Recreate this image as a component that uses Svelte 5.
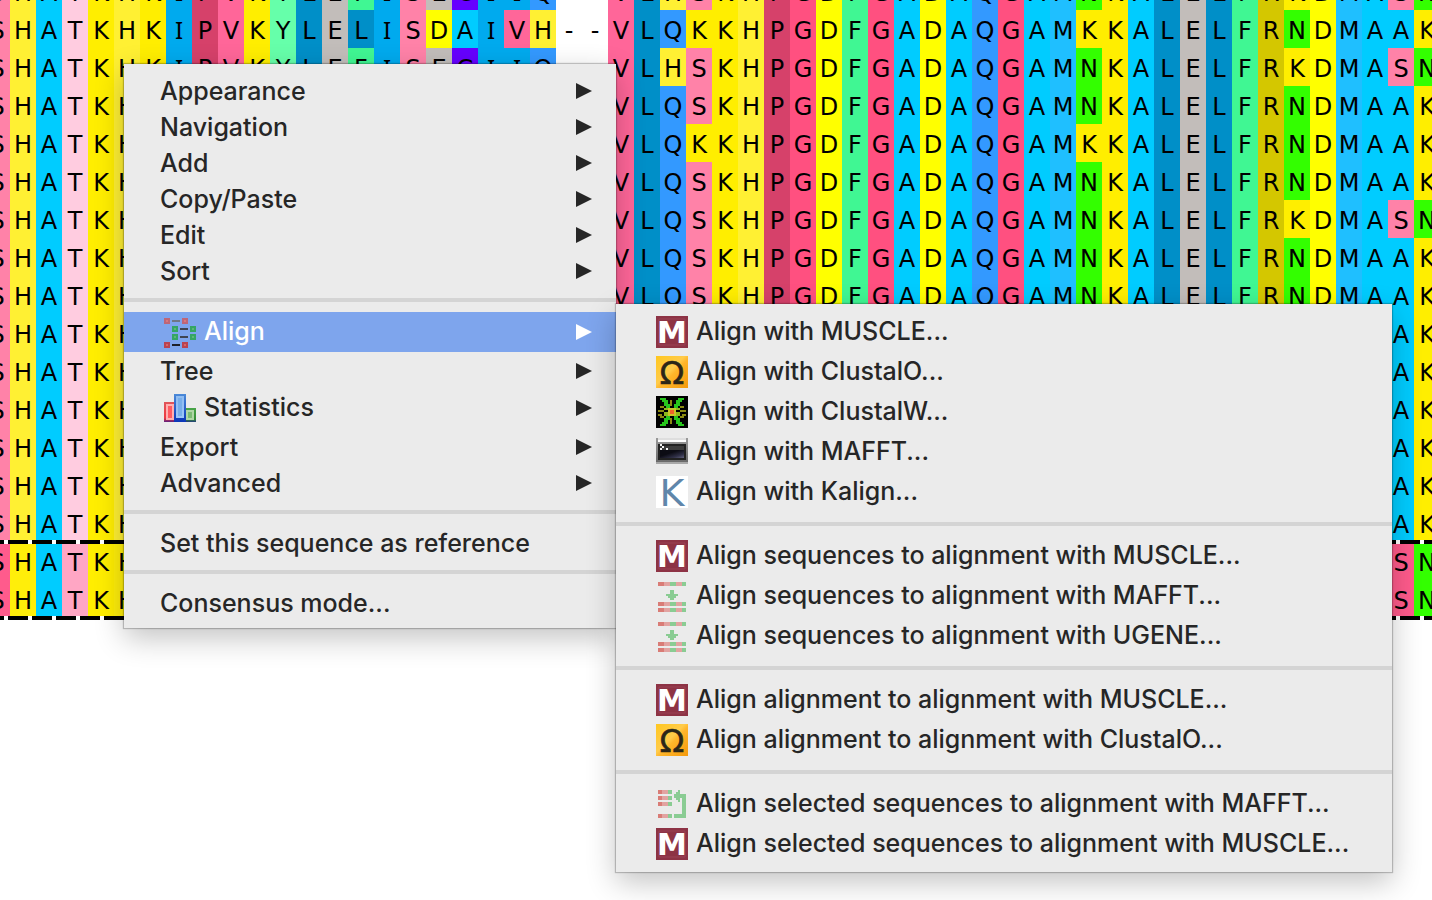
<script>
  const common = 'SHATKHKIPVKYLEFISECIIQ--VL';
  const tail = 'KHPGDFGADAQGAM';
  const typical = common + 'QS' + tail + 'NKALELFRNDMAAK';
  const variant = common + 'HS' + tail + 'NKALELFRKDMASN';

  const rows = [
    variant,
    'SHATKHKIPVKYLELISDAIVH--VLQK' + tail + 'KKALELFRNDMAAK',
    variant,
    typical,
    common + 'QK' + tail + 'KKALELFRNDMAAK',
    typical,
    common + 'QS' + tail + 'NKALELFRKDMASN',
    ...Array(8).fill(typical)
  ];
  const consensus = [variant, variant];

  const menu = [
    { label: 'Appearance', sub: true },
    { label: 'Navigation', sub: true },
    { label: 'Add', sub: true },
    { label: 'Copy/Paste', sub: true },
    { label: 'Edit', sub: true },
    { label: 'Sort', sub: true },
    null,
    { label: 'Align', sub: true, icon: 'align', active: true },
    { label: 'Tree', sub: true },
    { label: 'Statistics', sub: true, icon: 'stats' },
    { label: 'Export', sub: true },
    { label: 'Advanced', sub: true },
    null,
    { label: 'Set this sequence as reference' },
    null,
    { label: 'Consensus mode...' }
  ];

  const submenu = [
    { label: 'Align with MUSCLE...', icon: 'muscle' },
    { label: 'Align with ClustalO...', icon: 'omega' },
    { label: 'Align with ClustalW...', icon: 'clustalw' },
    { label: 'Align with MAFFT...', icon: 'terminal' },
    { label: 'Align with Kalign...', icon: 'kalign' },
    null,
    { label: 'Align sequences to alignment with MUSCLE...', icon: 'muscle' },
    { label: 'Align sequences to alignment with MAFFT...', icon: 'insert' },
    { label: 'Align sequences to alignment with UGENE...', icon: 'insert' },
    null,
    { label: 'Align alignment to alignment with MUSCLE...', icon: 'muscle' },
    { label: 'Align alignment to alignment with ClustalO...', icon: 'omega' },
    null,
    { label: 'Align selected sequences to alignment with MAFFT...', icon: 'selected' },
    { label: 'Align selected sequences to alignment with MUSCLE...', icon: 'muscle' }
  ];
</script>

{#snippet bars(y)}
  <path fill="#d97c76" d="M1 {y}h3v2h-3z" />
  <path fill="#e2a3a1" d="M4 {y}h3v2h-3zM10 {y}h3v2h-3z" />
  <path fill="#8acc93" d="M7 {y}h3v2h-3zM13 {y}h2v2h-2z" />
{/snippet}

{#snippet icon(name)}
  <svg class="icon" viewBox="0 0 16 16" aria-hidden="true">
    {#if name === 'align'}
      <g shape-rendering="crispEdges">
        <path fill="#bd6678" d="M0 1h3v3H0zM9 1h3v3H9z" />
        <path fill="#d9777d" d="M1 2h1v1H1zM10 2h1v1h-1z" />
        <path fill="#35a565" d="M4 5h3v3H4zM13 5h3v3h-3zM4 9h3v3H4zM13 9h3v3h-3z" />
        <path fill="#5ab878" d="M5 6h1v1H5zM14 6h1v1h-1zM5 10h1v1H5zM14 10h1v1h-1z" />
        <path fill="#bb4350" d="M0 13h3v3H0zM9 13h3v3H9z" />
        <path fill="#d76565" d="M1 14h1v1H1zM10 14h1v1h-1z" />
        <path fill="#6f7786" d="M4 2h4v1H4z" />
        <path fill="#3f4452" d="M8 6h4v1H8zM8 10h4v1H8z" />
        <path fill="#1d2029" d="M4 14h4v1H4z" />
      </g>
    {:else if name === 'stats'}
      <defs>
        <linearGradient id="blue" x1="0" y1="0" x2="0" y2="1"><stop offset="0" stop-color="#4b8ad8" /><stop offset="1" stop-color="#0a35b8" /></linearGradient>
        <linearGradient id="red" x1="0" y1="0" x2="0" y2="1"><stop offset="0" stop-color="#e0555a" /><stop offset=".8" stop-color="#ef3a40" /><stop offset="1" stop-color="#5a2080" /></linearGradient>
        <linearGradient id="green" x1="0" y1="0" x2="0" y2="1"><stop offset="0" stop-color="#4aa54a" /><stop offset=".8" stop-color="#348c34" /><stop offset="1" stop-color="#233a80" /></linearGradient>
        <linearGradient id="sky" x1="0" y1="0" x2="0" y2="1"><stop offset="0" stop-color="#8fbcf0" /><stop offset="1" stop-color="#9cc6f8" /></linearGradient>
      </defs>
      <g shape-rendering="crispEdges">
        <path fill="url(#red)" d="M0 5h5v10H0z" />
        <path fill="#ffb0b0" d="M1 6h4v8H1z" /><path fill="#ff5b62" d="M2 7h2v6H2z" />
        <path fill="url(#green)" d="M11 8h5v7h-5z" />
        <path fill="#b0d6a6" d="M11 9h4v5h-4z" /><path fill="#7dbb75" d="M12 10h2v3h-2z" />
        <path fill="url(#blue)" d="M5 1h6v14H5z" />
        <path fill="url(#sky)" d="M6 2h4v11H6z" /><path fill="#78aeea" d="M7 3h2v9H7z" />
      </g>
    {:else if name === 'muscle'}
      <path fill="#8d3345" d="M0 0h16v16H0z" />
      <path fill="none" stroke="#9a4355" stroke-width=".5" d="M1.500 1.500h13v13h-13z" />
      <text x="8" y="13.500" class="m" text-anchor="middle">M</text>
    {:else if name === 'omega'}
      <defs><linearGradient id="gold" x1="0" y1="0" x2="1" y2="1"><stop offset="0" stop-color="#ffc71f" /><stop offset=".45" stop-color="#ffcb4a" /><stop offset=".55" stop-color="#ffb52a" /><stop offset="1" stop-color="#f49a0c" /></linearGradient></defs>
      <path fill="url(#gold)" d="M0 0h16v16H0z" />
      <text x="8" y="14" class="o" text-anchor="middle">Ω</text>
    {:else if name === 'clustalw'}
      <path d="M0 0h16v16H0z" />
      <g shape-rendering="crispEdges">
        <path fill="#8c8a12" d="M5 3h1v2H5zM10 3h1v2h-1zM7 2h1v3H7zM1 7h3v1H1zM12 7h3v1h-3zM2 5h2v1H2zM12 5h2v1h-2zM2 10h2v1H2zM12 10h2v1h-2zM1 9h2v1H1zM13 9h2v1h-2zM5 11h1v3H5zM10 11h1v3h-1zM7 11h1v3H7z" />
        <path fill="#8fb81c" d="M6 4h1v2H6zM9 4h1v2H9zM4 6h8v1H4zM4 9h8v1H4zM6 10h1v2H6zM9 10h1v2H9zM4 8h8v1H4z" />
        <path fill="#27c51c" d="M2 1h3v1h1v2h1v2h1v1H6V6H5V5H4V3H3V2H2zM11 1h3v1h-1v1h-1v2h-1v1h-1v1H8V6h1V4h1V2h1zM6 9h2v1H7v2H6v2H5v1H2v-1h1v-1h1v-2h1v-1h1zM8 9h2v1h1v1h1v2h1v1h1v1h-3v-1h-1v-2H9v-2H8z" />
        <path fill="#c9c528" d="M6 6h4v4H6z" /><path fill="#f0642a" d="M7 7h2v2H7z" />
      </g>
    {:else if name === 'terminal'}
      <defs>
        <linearGradient id="frame" x1="0" y1="0" x2="0" y2="1"><stop offset="0" stop-color="#999" /><stop offset="1" stop-color="#666" /></linearGradient>
        <linearGradient id="screen" x1="0" y1="0" x2="1" y2="1"><stop offset=".4" stop-color="#0c0c14" /><stop offset=".75" stop-color="#303047" /><stop offset="1" stop-color="#62627e" /></linearGradient>
      </defs>
      <g shape-rendering="crispEdges">
        <path fill="url(#frame)" d="M0 1h16v13H0z" />
        <path fill="#dedede" d="M1 1h14v1H1z" /><path fill="#fff" d="M1 2h14v1H1z" />
        <path fill="#a8a8a8" d="M0 13h16v1H0z" />
        <path fill="#222" d="M1 4h14v8H1z" />
        <path fill="#3c3c3c" d="M2 5h12v2H2z" />
        <path fill="url(#screen)" d="M2 7h12v4H2z" />
        <path fill="#f4f4f4" d="M2 4h1v1H2zM3 5h1v1H3zM2 6h1v1H2zM5 6h1v1H5z" />
      </g>
    {:else if name === 'kalign'}
      <path fill="#fff" d="M0 0h16v16H0z" />
      <text x="8" y="15" class="k" text-anchor="middle">K</text>
    {:else if name === 'insert'}
      <g shape-rendering="crispEdges">
        {@render bars(1)}{@render bars(11)}{@render bars(14)}
        <path fill="#8acc93" d="M7 5h2v2h2v1h-1v1H9v1H7V9H6V8H5V7h2z" />
      </g>
    {:else if name === 'selected'}
      <g shape-rendering="crispEdges">
        {#each [1, 4, 7, 13] as y}
          <path fill="#d97c76" d="M1 {y}h2v2H1z" />
          <path fill="#e2a3a1" d="M3 {y}h3v2H3z" />
          <path fill="#8acc93" d="M6 {y}h2v2H6z" />
        {/each}
        <path fill="#8acc93" d="M11 1h1v2h3v12H9v-2h4V5h-1v2h-1V6h-1V5H9V3h1V2h1z" />
      </g>
    {/if}
  </svg>
{/snippet}

{#snippet entries(list)}
  {#each list as item}
    {#if item}
      <li>
        <button class="item" class:tall={item.icon} class:active={item.active}>
          {#if item.icon}{@render icon(item.icon)}{/if}
          <span>{item.label}</span>
          {#if item.sub}
            <svg class="arrow" viewBox="0 0 16 16" aria-hidden="true"><path fill="currentColor" d="M0 0l16 8L0 16z" /></svg>
          {/if}
        </button>
      </li>
    {:else}
      <li class="sep" role="separator"></li>
    {/if}
  {/each}
{/snippet}

{#snippet sequence(row)}
  <div class="row">
    {#each row as letter}
      <span class="cell {letter === '-' ? 'gap' : letter}">{letter}</span>
    {/each}
  </div>
{/snippet}

<main>
  <div class="alignment">
    {#each rows as row}{@render sequence(row)}{/each}
    <div class="consensus">
      {#each consensus as row}{@render sequence(row)}{/each}
    </div>
  </div>
  <ul class="menu context">{@render entries(menu)}</ul>
  <ul class="menu submenu">{@render entries(submenu)}</ul>
</main>

<style>
  :global(body) { margin: 0; background: #fff; }
  main { position: relative; min-height: 100vh; overflow: hidden; }
  .alignment { margin: -28px 0 0 -16px; }
  .row { display: flex; }
  .cell {
    flex: none;
    box-sizing: border-box;
    width: 26px;
    height: 38px;
    padding-top: 2px;
    font: 24px/38px 'DejaVu Sans', sans-serif;
    text-align: center;
    color: #000;
  }
  .S { background: #ff82a8; }
  .H { background: #fff033; }
  .A { background: #00ccff; }
  .T { background: #ffcce0; }
  .K { background: #ffee00; }
  .I { background: #00aaee; padding-top: 1px; font-family: 'Noto Sans', sans-serif; }
  .P { background: #d6416a; }
  .V { background: #ff6699; }
  .Y { background: #66ffaa; }
  .L { background: #008fc8; }
  .E { background: #c2bdba; }
  .F { background: #40f793; }
  .D { background: #ffff00; }
  .C { background: #6600ff; }
  .Q { background: #3399ff; }
  .G { background: #ff5080; }
  .M { background: #1fbfff; }
  .N { background: #33ff00; }
  .R { background: #d4c700; }
  .consensus { position: relative; }
  .consensus .S { background: #ff5b8c; }
  .consensus .H { background: #ffee0a; }
  .consensus .T { background: #ffa6c4; }
  .consensus::before, .consensus::after {
    content: '';
    position: absolute;
    left: 0;
    right: 0;
    height: 4px;
    background: repeating-linear-gradient(90deg, #000 0 20px, #fff 20px 24px);
  }
  .consensus::before { top: -2px; }
  .consensus::after { bottom: -2px; }

  .menu {
    position: absolute;
    box-sizing: border-box;
    margin: 0;
    padding: 8px 0;
    list-style: none;
    background: #ebebeb;
    color: #262626;
    box-shadow: 0 0 1px 1px rgba(0, 0, 0, 0.22), 0 10px 28px rgba(0, 0, 0, 0.24);
  }
  .context { left: 124px; top: 64px; width: 492px; }
  .submenu { left: 616px; top: 304px; width: 776px; }
  .item {
    display: flex;
    align-items: center;
    box-sizing: border-box;
    width: 100%;
    height: 36px;
    padding: 2px 24px 0 36px;
    border: 0;
    background: none;
    color: inherit;
    font: 500 25px/34px Inter, sans-serif;
    text-align: left;
    white-space: nowrap;
  }
  .tall { height: 40px; gap: 8px; padding: 0 24px 0 40px; }
  .tall span { padding-bottom: 2px; }
  .active { background: #7ea5ed; color: #fff; }
  .icon { flex: none; width: 32px; height: 32px; }
  .arrow { flex: none; width: 16px; height: 16px; margin-left: auto; }
  .sep { height: 4px; padding: 10px 0; background: #d4d4d4 content-box; }
  .m { font: bold 15px 'DejaVu Sans', sans-serif; fill: #fff; }
  .o { font: 16px 'DejaVu Sans', sans-serif; fill: #2b2618; stroke: #2b2618; stroke-width: 0.3px; }
  .k { font: 19px 'DejaVu Sans', sans-serif; fill: #5f86aa; }
</style>
